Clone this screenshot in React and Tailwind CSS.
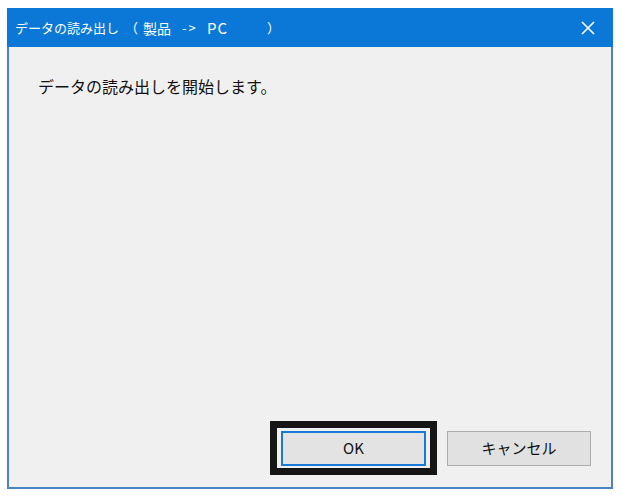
import React from "react";

export default function App() {
  const font = { fontFamily: '"Noto Sans CJK JP", "Noto Sans", sans-serif' };
  return (
    <div className="w-[622px] h-[498px] bg-white overflow-hidden" style={font}>
      <div className="ml-[7px] mt-[8px] w-[606px] h-[481px] flex flex-col">
        <div className="h-[39px] bg-[#0b78d7] flex items-center justify-between pl-[8px] pr-[18px] text-white">
          <div className="flex items-center text-[13px] leading-none whitespace-pre">
            <span className="w-[104px]">データの読み出し</span>
            <span className="ml-[6px] w-[13px]">（</span>
            <span className="ml-[5px] w-[30px] text-[14px]">製品</span>
            <span className="ml-[9px] w-[25px] tracking-[2px]">-&gt;</span>
            <span className="w-[58px] text-[15px] tracking-[1px]">PC</span>
            <span className="ml-[2px]">）</span>
          </div>
          <svg width="14" height="14" viewBox="0 0 14 14" className="mt-[1px]">
            <path d="M1 1 L13 13 M13 1 L1 13" stroke="white" strokeWidth="1.6" fill="none" />
          </svg>
        </div>
        <div className="flex-1 bg-[#f0f0f0] border-x-2 border-b-2 border-[#4c82c4] flex flex-col">
          <div className="pt-[29px] pl-[29px] text-[16px] leading-[20px] text-[#111]">
            データの読み出しを開始します。
          </div>
          <div className="flex-1" />
          <div className="flex justify-end gap-[21px] pr-[20px] pb-[21px]">
            <div className="relative">
              <div className="absolute -left-[11px] -right-[11px] -top-[10px] -bottom-[9px] border-[7px] border-[#151515]" />
              <button className="w-[145px] h-[35px] bg-[#e3e3e3] border-2 border-[#1a7ad8] text-[15px] text-[#111] flex items-center justify-center">
                OK
              </button>
            </div>
            <button className="w-[144px] h-[35px] bg-[#e1e1e1] border border-[#adadad] text-[15px] text-[#111] flex items-center justify-center">
              キャンセル
            </button>
          </div>
        </div>
      </div>
    </div>
  );
}
